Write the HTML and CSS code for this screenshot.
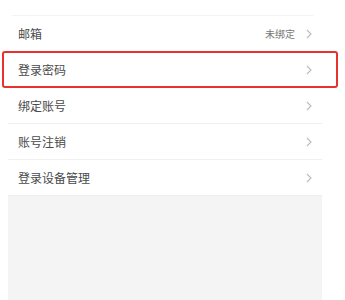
FILE: index.html
```html
<!DOCTYPE html>
<html lang="zh-CN">
<head>
	<meta charset="UTF-8">
	<meta name="viewport" content="width=device-width, initial-scale=1.0">
	<title>账号与安全</title>
	<link rel="stylesheet" href="styles.css">
</head>
<body>
	<div class="container">
		<div class="top-gap"></div>
		<div class="list">
			<div class="row">
				<span class="label">邮箱</span>
				<span class="value">未绑定</span>
				<svg class="arrow" width="6" height="10" viewBox="0 0 6 10"><path d="M1 1l4 4-4 4" fill="none" stroke="#bbb" stroke-width="1.1"/></svg>
			</div>
			<div class="row active">
				<span class="label">登录密码</span>
				<svg class="arrow" width="6" height="10" viewBox="0 0 6 10"><path d="M1 1l4 4-4 4" fill="none" stroke="#bbb" stroke-width="1.1"/></svg>
			</div>
			<div class="row">
				<span class="label">绑定账号</span>
				<svg class="arrow" width="6" height="10" viewBox="0 0 6 10"><path d="M1 1l4 4-4 4" fill="none" stroke="#bbb" stroke-width="1.1"/></svg>
			</div>
			<div class="row">
				<span class="label">账号注销</span>
				<svg class="arrow" width="6" height="10" viewBox="0 0 6 10"><path d="M1 1l4 4-4 4" fill="none" stroke="#bbb" stroke-width="1.1"/></svg>
			</div>
			<div class="row">
				<span class="label">登录设备管理</span>
				<svg class="arrow" width="6" height="10" viewBox="0 0 6 10"><path d="M1 1l4 4-4 4" fill="none" stroke="#bbb" stroke-width="1.1"/></svg>
			</div>
		</div>
		<div class="blank"></div>
	</div>
</body>
</html>
```

FILE: styles.css
```css
body {
	margin: 0;
	background: #fff;
	font-family: "Liberation Sans", "Noto Sans CJK SC", sans-serif;
}
.container {
	margin: 0 23px 0 8px;
}
.top-gap {
	height: 15px;
	margin: 0 9px 0 4px;
	border-bottom: 1px solid #f3f3f3;
}
.row {
	position: relative;
	display: flex;
	align-items: center;
	height: 35px;
	padding: 0 10px 0 10px;
	border-bottom: 1px solid #f0f0f0;
}
.row .label {
	flex: 1;
	font-size: 12px;
	color: #4a4a4a;
}
.row .value {
	font-size: 10px;
	color: #777;
	margin-right: 11px;
}
.row .arrow {
	display: block;
}
/* 선택 표시 박스 */
.row.active::after {
	content: "";
	position: absolute;
	left: -6px; right: -16px;
	top: -1px; bottom: -1px;
	border: 2px solid #e8322e;
	border-radius: 3px;
}
.blank {
	height: 110px;
	background: #f4f4f4;
}
```
